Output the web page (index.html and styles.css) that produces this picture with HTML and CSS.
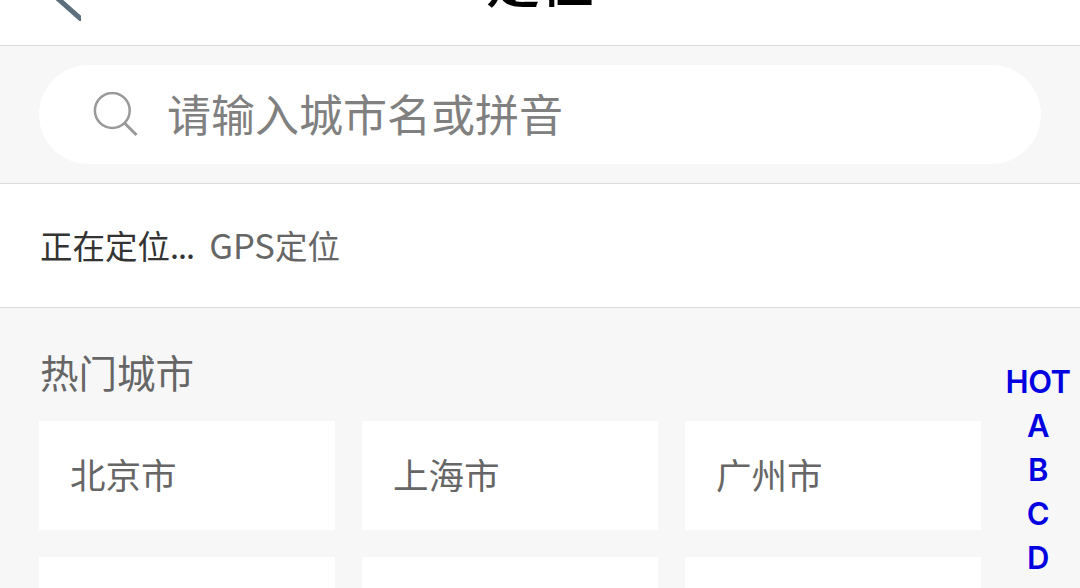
FILE: index.html
```
<!DOCTYPE html>
<html lang="zh-CN">

<head>
    <meta charset="UTF-8">
    <title>定位</title>
    <link rel="stylesheet" href="styles.css">
</head>

<body>
    <header class="header">
        <a class="back" href="#">
            <svg width="37" height="64" viewBox="0 0 37 64">
                <path d="M38 1 L3 32 L38 63" fill="none" stroke="#5b6f7c" stroke-width="5" />
            </svg>
        </a>
        <h1 class="title">定位</h1>
    </header>

    <div class="search">
        <label class="search-box">
            <svg class="search-icon" width="46" height="46" viewBox="0 0 46 46">
                <g fill="none" stroke="#999" stroke-width="2.5">
                    <circle cx="19.3" cy="18.5" r="17.4" />
                    <path d="M31 30.5 L43.5 43" stroke-width="3" />
                </g>
            </svg>
            <input class="search-input" type="text" placeholder="请输入城市名或拼音">
        </label>
    </div>

    <div class="location">
        <span class="location-status">正在定位<span class="dots">...</span></span>
        <span class="location-type"><span class="gps">GPS</span>定位</span>
    </div>

    <main class="main">
        <section class="hot">
            <h2 class="hot-title">热门城市</h2>
            <div class="city-list">
                <a class="city">北京市</a>
                <a class="city">上海市</a>
                <a class="city">广州市</a>
                <a class="city"></a>
                <a class="city"></a>
                <a class="city"></a>
            </div>
        </section>

        <nav class="letters">
            <a href="#hot">HOT</a>
            <a href="#A">A</a>
            <a href="#B">B</a>
            <a href="#C">C</a>
            <a href="#D">D</a>
        </nav>
    </main>
</body>

</html>
```
FILE: styles.css
```
* {
    box-sizing: border-box;
}

body {
    display: flex;
    flex-direction: column;
    margin: 0;
    height: 588px;
    overflow: hidden;
    background-color: #f7f7f7;
    font-family: "Noto Sans CJK SC", sans-serif;
    color: #666;
}

.header {
    display: grid;
    grid-template-columns: 1fr auto 1fr;
    grid-template-rows: 45px;
    align-items: end;
    flex: none;
    height: 46px;
    overflow: hidden;
    background-color: #fff;
    border-bottom: 1px solid #dcdcdc;
}

.back {
    margin-left: 44px;
    margin-bottom: 24px;
    height: 64px;
}

.back svg {
    display: block;
}

.title {
    margin: 0 0 35px;
    font-size: 54px;
    line-height: 60px;
    font-weight: 500;
    color: #000;
}

.search {
    flex: none;
    height: 138px;
    padding: 19px 39px;
    border-bottom: 1px solid #dcdcdc;
}

.search-box {
    display: flex;
    align-items: center;
    height: 99px;
    padding-left: 54px;
    border-radius: 50px;
    background-color: #fff;
}

.search-input {
    flex: 1;
    margin-left: 28px;
    padding: 0 0 4px;
    border: none;
    outline: none;
    background: none;
    font-family: inherit;
    font-size: 44px;
    line-height: 60px;
}

.search-input::placeholder {
    color: #808080;
}

.location {
    display: flex;
    flex: none;
    align-items: center;
    gap: 15px;
    height: 124px;
    padding: 0 0 2px 40px;
    background-color: #fff;
    border-bottom: 1px solid #dcdcdc;
    font-size: 32.5px;
    line-height: 48px;
}

.location-status {
    color: #333;
}

.dots {
    letter-spacing: -1px;
}

.gps {
    font-size: 34.5px;
    line-height: 1;
}

.main {
    display: flex;
    flex: 1;
    justify-content: space-between;
    min-height: 0;
    overflow: hidden;
}

.hot {
    width: 942px;
    margin-left: 39px;
}

.hot-title {
    margin: 37px 0 24px 1px;
    font-size: 38.5px;
    line-height: 52px;
    font-weight: 400;
}

.city-list {
    display: grid;
    grid-template-columns: repeat(3, 296px);
    gap: 27px;
}

.city {
    height: 109px;
    padding-left: 31px;
    background-color: #fff;
    font-size: 35.5px;
    line-height: 106px;
}

.letters {
    display: flex;
    flex-direction: column;
    width: 84px;
    margin-top: 52px;
    text-align: center;
    font-family: Inter, sans-serif;
    font-size: 31px;
    font-weight: 600;
    line-height: 44px;
    letter-spacing: -0.5px;
}

.letters a {
    color: #0000e0;
    text-decoration: none;
}
```
